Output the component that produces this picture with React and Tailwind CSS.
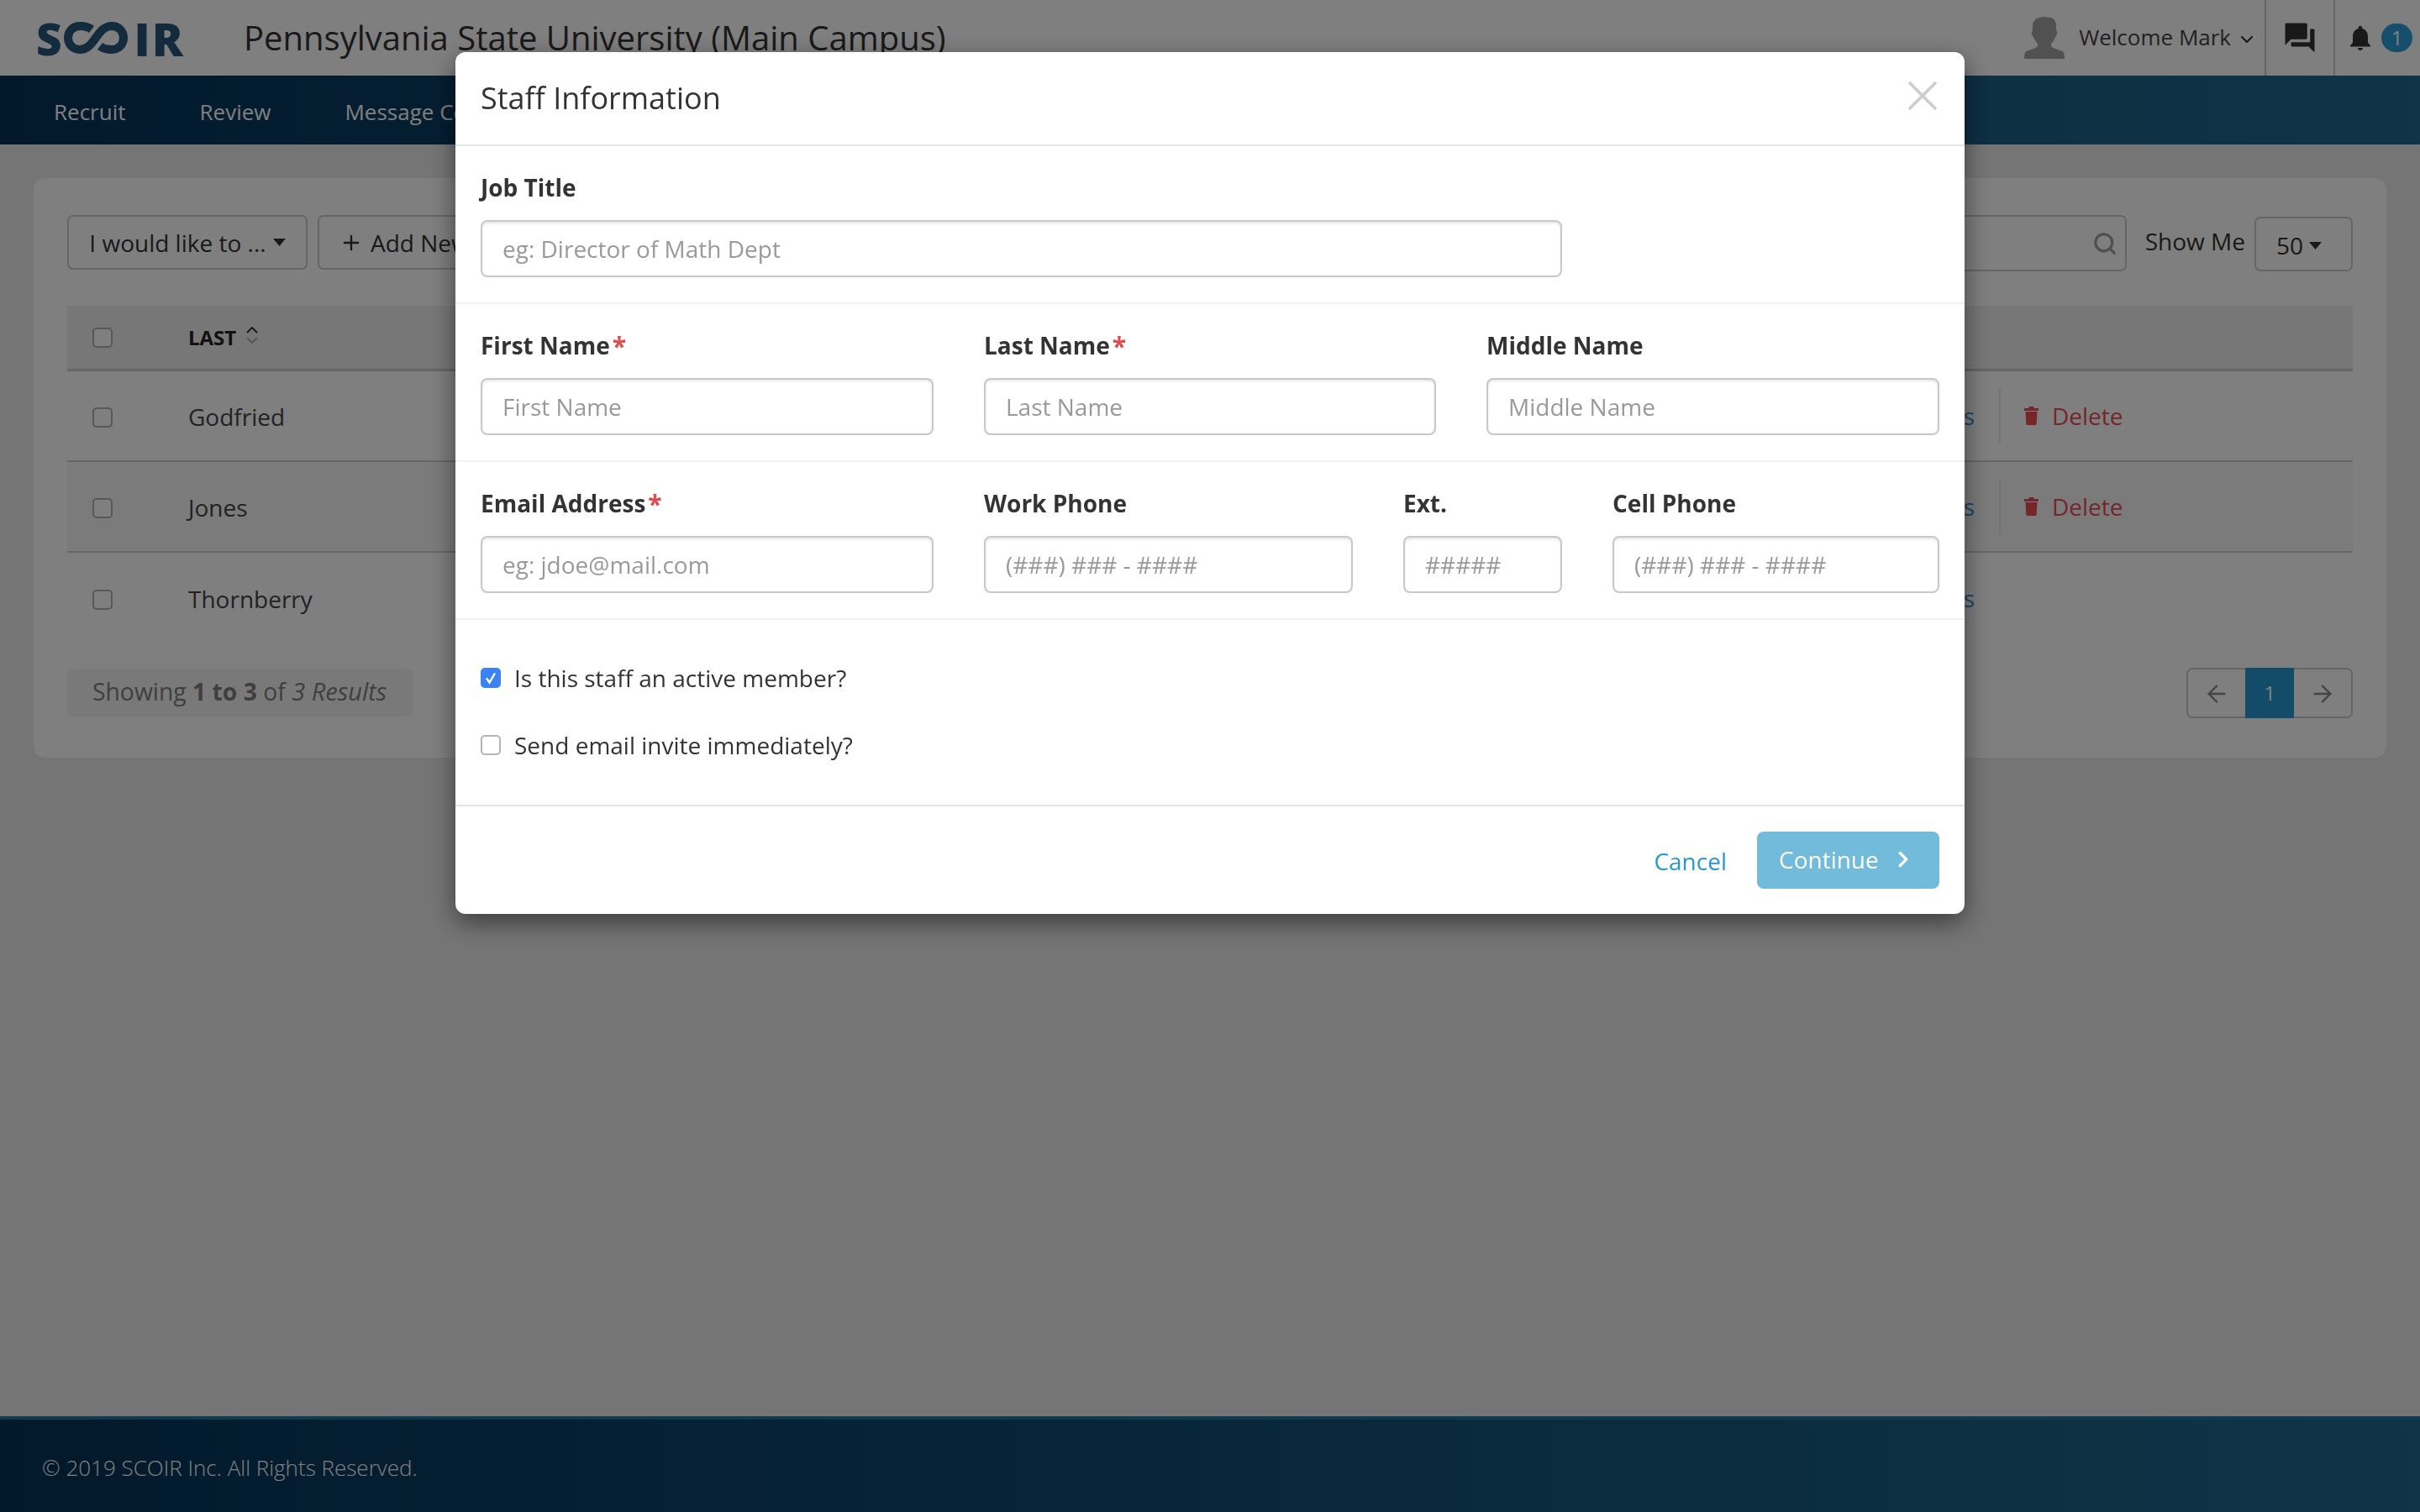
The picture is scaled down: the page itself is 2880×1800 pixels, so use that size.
import React from "react";
import { ArrowLeft, ArrowRight, ChevronDown, ChevronRight, Plus, Search } from "lucide-react";
import { MdNotifications, MdQuestionAnswer } from "react-icons/md";

const Caret = ({ className }) => (
    <svg viewBox="0 0 15 9" className={className}>
        <path d="M0 0h15L7.5 9z" fill="currentColor" />
    </svg>
);

const Logo = () => (
    <div className="flex items-center w-[173px] h-[40px] text-[#26567a] text-[53px] font-extrabold leading-none">
        <span>S</span>
        <svg viewBox="0 0 76 38" className="w-[76px] h-[38px] ml-[2px] mr-[8px] shrink-0" fill="none">
            <path
                d="M33 9C29 6 24 5 19 5C11 5 5 11 5 19C5 27 11 33 19 33C28 33 33 26 38 19C43 12 48 5 57 5C65 5 71 11 71 19C71 27 65 33 57 33C52 33 47 32 43 29"
                stroke="currentColor"
                strokeWidth="10"
            />
        </svg>
        <span className="text-[55px] tracking-[2px]">IR</span>
    </div>
);

const Avatar = () => (
    <svg viewBox="0 0 48 50" className="w-[48px] h-[50px]">
        <path
            d="M24 0c3 0 4 1 6 1 6 0 8 5 8 10 0 3 0 5 1 7 1 2-1 5-2 6-1 3-3 6-5 8v3c3 3 8 4 11 5 4 1 5 3 5 10H0c0-7 1-9 5-10 3-1 8-2 11-5v-3c-2-2-4-5-5-8-1-1-3-4-2-6 1-2 1-4 1-7C10 5 14 0 24 0z"
            fill="#a2a2a2"
        />
    </svg>
);

const Trash = () => (
    <svg viewBox="0 0 17 22" className="w-[17px] h-[22px]">
        <path
            d="M5.5 0h6v2H17v3H0V2h5.5zM1.5 6h14l-.8 14.5a1.5 1.5 0 0 1-1.5 1.5H3.8a1.5 1.5 0 0 1-1.5-1.5z"
            fill="currentColor"
        />
    </svg>
);

const Box = ({ checked }) => (
    <span
        className={
            checked
                ? "w-[24px] h-[24px] rounded-[5px] bg-[#3b82f6] flex items-center justify-center"
                : "w-[24px] h-[24px] rounded-[5px] border-2 border-[#b4b4b4] bg-white"
        }
    >
        {checked && (
            <svg viewBox="0 0 24 24" className="w-[24px] h-[24px]" fill="none">
                <path d="M7 12.5l3.5 5L17 6.5" stroke="white" strokeWidth="2.4" />
            </svg>
        )}
    </span>
);

const Row = ({ name, canDelete, striped }) => (
    <div className={`flex items-center h-[108px] ${striped ? "bg-[#f7f7f7]" : ""} ${canDelete ? "border-b-2 border-[#cccccc]" : ""}`}>
        <div className="w-[144px] pl-[30px] flex pt-[4px]">
            <span className="w-[24px] h-[24px] rounded-[5px] border-2 border-[#b0b0b0] bg-white" />
        </div>
        <div className="flex-1 text-[28px] text-[#444444] pt-[1px]">{name}</div>
        <a className="text-[28px] text-[#2a93c9]">Details</a>
        <div className="w-[450px] flex items-center pl-[29px]">
            {canDelete && (
                <div className="flex items-center h-[64px] border-l-2 border-[#e6e6e6] pl-[28px] gap-[16px] text-[#e84e55] text-[28px]">
                    <Trash />
                    Delete
                </div>
            )}
        </div>
    </div>
);

const Field = ({ label, required, placeholder, width }) => (
    <div className={width}>
        <label className="flex h-[38px] items-center text-[28px] font-bold text-[#333333] mb-[20px]">
            {label}
            {required && <span className="text-[#e04b4b] text-[30px] ml-[3px]">*</span>}
        </label>
        <input
            readOnly
            placeholder={placeholder}
            className="w-full h-[68px] px-[24px] text-[28px] text-[#333333] placeholder:text-[#999999] rounded-[8px] border-2 border-[#c8c8c8] shadow-[inset_0_2px_3px_rgba(0,0,0,0.1)] outline-none"
        />
    </div>
);

export default function App() {
    return (
        <div className="relative min-h-screen flex flex-col bg-[#ebebeb] font-['Open_Sans',sans-serif] text-[#333333]">
            {/* Header */}
            <header className="h-[90px] bg-white flex items-center pl-[43px]">
                <Logo />
                <h1 className="ml-[74px] text-[40px] text-[#333333] leading-none">Pennsylvania State University (Main Campus)</h1>
                <div className="ml-auto h-full flex items-center">
                    <Avatar />
                    <span className="ml-[17px] pb-[2px] text-[26px] text-[#444444]">Welcome Mark</span>
                    <ChevronDown className="ml-[7px] w-[24px] h-[24px] mt-[3px]" strokeWidth={2.2} />
                    <div className="ml-[9px] h-full w-[84px] border-x-2 border-[#cccccc] flex items-center justify-center">
                        <MdQuestionAnswer className="w-[42px] h-[42px] text-[#333333]" />
                    </div>
                    <div className="w-[101px] h-full flex items-center pl-[12px]">
                        <MdNotifications className="w-[36px] h-[38px] text-[#333333]" />
                        <span className="ml-[7px] w-[37px] h-[34px] rounded-full bg-[#2a9fd6] text-white text-[24px] flex items-center justify-center">1</span>
                    </div>
                </div>
            </header>

            {/* Nav */}
            <nav className="h-[82px] pt-[4px] bg-linear-to-r from-[#053358] to-[#206a90] flex items-center pl-[64px] gap-[88px] text-[26px] text-white">
                <span>Recruit</span>
                <span>Review</span>
                <span>Message Center</span>
            </nav>

            {/* Main */}
            <main className="flex-1 px-[40px] pt-[40px]">
                <section className="bg-white rounded-[14px] h-[690px] px-[40px] pt-[44px]">
                    <div className="flex items-start">
                        <button className="h-[65px] w-[286px] rounded-[7px] border-2 border-[#cccccc] flex items-center justify-center gap-[8px] text-[28px]">
                            I would like to ...
                            <Caret className="w-[15px] h-[9px]" />
                        </button>
                        <button className="ml-[12px] h-[65px] w-[300px] rounded-[7px] border-2 border-[#cccccc] flex items-center pl-[24px] gap-[9px] text-[28px]">
                            <Plus className="w-[28px] h-[28px]" strokeWidth={2} />
                            Add New
                        </button>
                        <div className="ml-auto h-[67px] w-[700px] rounded-[7px] border-2 border-[#cccccc] flex items-center justify-end pr-[9px]">
                            <Search className="w-[30px] h-[30px] text-[#a0a0a0]" strokeWidth={2.6} />
                        </div>
                        <span className="ml-[22px] h-[65px] pb-[4px] flex items-center text-[28px]">Show Me</span>
                        <button className="ml-[11px] mt-[2px] h-[65px] w-[117px] rounded-[7px] border-2 border-[#cccccc] flex items-center pl-[24px] pt-[3px] gap-[7px] text-[28px]">
                            50
                            <Caret className="w-[15px] h-[9px]" />
                        </button>
                    </div>

                    <div className="mt-[41px] h-[78px] bg-[#eeeeee] border-b-[3px] border-[#cccccc] flex items-center">
                        <div className="w-[144px] pl-[30px] flex">
                            <span className="w-[24px] h-[24px] rounded-[5px] border-2 border-[#b0b0b0] bg-white" />
                        </div>
                        <span className="text-[24px] font-bold text-[#222222]">LAST</span>
                        <svg viewBox="0 0 14 20" className="ml-[12px] w-[14px] h-[20px] mb-[6px]" fill="none" strokeWidth="2">
                            <path d="M1 7l6-6 6 6" stroke="#333333" />
                            <path d="M1 13l6 6 6-6" stroke="#aaaaaa" />
                        </svg>
                    </div>

                    <Row name="Godfried" canDelete />
                    <Row name="Jones" canDelete striped />
                    <Row name="Thornberry" />

                    <div className="mt-[30px] flex items-start justify-between">
                        <div className="h-[57px] w-[412px] rounded-[8px] bg-[#f3f3f3] flex items-center pl-[30px] pb-[3px] text-[28.3px] text-[#7f7f7f]">
                            <span className="whitespace-pre">Showing <b>1 to 3</b> of <i className="text-[29px]">3 Results</i></span>
                        </div>
                        <div className="h-[60px] w-[198px] rounded-[7px] border-2 border-[#cccccc] flex items-center -mt-[1px]">
                            <span className="w-[68px] flex justify-center pt-[2px]"><ArrowLeft className="w-[32px] h-[32px] text-[#888888]" strokeWidth={1.8} /></span>
                            <span className="w-[58px] h-[60px] bg-[#2598d2] text-white text-[24px] flex items-center justify-center">1</span>
                            <span className="flex-1 flex justify-center pt-[2px]"><ArrowRight className="w-[32px] h-[32px] text-[#888888]" strokeWidth={1.8} /></span>
                        </div>
                    </div>
                </section>
            </main>

            {/* Footer */}
            <footer className="h-[114px] pt-[5px] border-t-4 border-[#1e74a0] bg-linear-to-r from-[#053358] to-[#206a90] flex items-center pl-[50px] text-[26px] font-light text-white">
                © 2019 SCOIR Inc. All Rights Reserved.
            </footer>

            {/* Modal */}
            <div className="fixed inset-0 bg-black/50 flex justify-center items-start pt-[62px]">
                <div className="w-[1796px] bg-white rounded-[12px] shadow-[0_10px_30px_rgba(0,0,0,0.5)]">
                    <div className="h-[112px] border-b-2 border-[#e5e5e5] flex items-center justify-between px-[30px]">
                        <h2 className="text-[36px] text-[#333333]">Staff Information</h2>
                        <svg viewBox="0 0 34 34" className="w-[34px] h-[34px] mb-[6px] mr-[3px]" fill="none">
                            <path d="M1 1l32 32M33 1L1 33" stroke="#cccccc" strokeWidth="3.5" />
                        </svg>
                    </div>

                    <div className="h-[188px] border-b-2 border-[#f2f2f2] px-[30px] pt-[30px]">
                        <Field label="Job Title" placeholder="eg: Director of Math Dept" width="w-[1287px]" />
                    </div>

                    <div className="h-[188px] border-b-2 border-[#f2f2f2] px-[30px] pt-[30px] flex gap-[60px]">
                        <Field label="First Name" required placeholder="First Name" width="w-[539px]" />
                        <Field label="Last Name" required placeholder="Last Name" width="w-[538px]" />
                        <Field label="Middle Name" placeholder="Middle Name" width="w-[539px]" />
                    </div>

                    <div className="h-[188px] border-b-2 border-[#f2f2f2] px-[30px] pt-[30px] flex gap-[60px]">
                        <Field label="Email Address" required placeholder="eg: jdoe@mail.com" width="w-[539px]" />
                        <Field label="Work Phone" placeholder="(###) ### - ####" width="w-[439px]" />
                        <Field label="Ext." placeholder="#####" width="w-[189px]" />
                        <Field label="Cell Phone" placeholder="(###) ### - ####" width="w-[389px]" />
                    </div>

                    <div className="h-[222px] border-b-2 border-[#e5e5e5] px-[30px] pt-[49px] flex flex-col gap-[40px] text-[28px] text-[#333333]">
                        <label className="h-[40px] flex items-center gap-[16px]">
                            <Box checked />
                            Is this staff an active member?
                        </label>
                        <label className="h-[40px] flex items-center gap-[16px]">
                            <Box />
                            Send email invite immediately?
                        </label>
                    </div>

                    <div className="h-[128px] px-[30px] flex items-center justify-end">
                        <a className="text-[28px] text-[#2a97cc] mt-[2px]">Cancel</a>
                        <button className="ml-[36px] h-[68px] w-[217px] pb-[2px] rounded-[8px] bg-[#72bbda] text-white text-[28px] flex items-center pl-[26px]">
                            Continue
                            <ChevronRight className="ml-[14px] w-[30px] h-[30px]" strokeWidth={2.6} />
                        </button>
                    </div>
                </div>
            </div>
        </div>
    );
}
